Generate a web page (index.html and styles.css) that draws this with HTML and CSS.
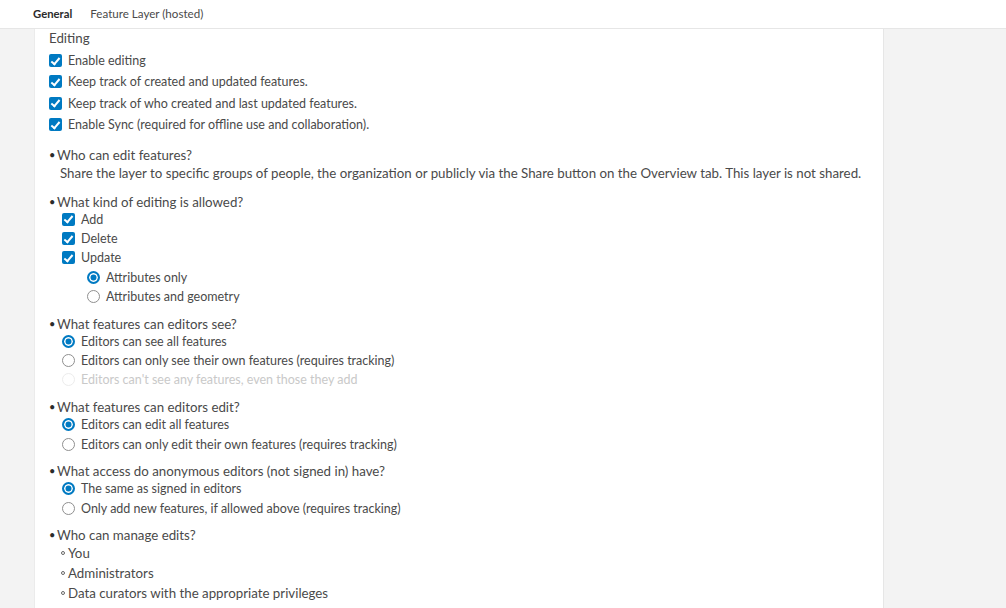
FILE: index.html
```html
<!DOCTYPE html>
<html>
<head>
<meta charset="utf-8">
<link rel="stylesheet" href="styles.css">
</head>
<body>
<header class="topbar">
  <span class="tab tab-active">General</span>
  <span class="tab">Feature Layer (hosted)</span>
</header>
<main class="main">
  <section class="panel">
    <h3 class="title">Editing</h3>
    <ul class="checks">
      <li class="row"><span class="cb"></span>Enable editing</li>
      <li class="row"><span class="cb"></span>Keep track of created and updated features.</li>
      <li class="row"><span class="cb"></span>Keep track of who created and last updated features.</li>
      <li class="row"><span class="cb"></span>Enable Sync (required for offline use and collaboration).</li>
    </ul>

    <div class="q q-first">
      <div class="qh"><span class="dot">•</span>Who can edit features?</div>
      <p class="note">Share the layer to specific groups of people, the organization or publicly via the Share button on the Overview tab. This layer is not shared.</p>
    </div>

    <div class="q">
      <div class="qh"><span class="dot">•</span>What kind of editing is allowed?</div>
      <div class="opt"><span class="cb"></span>Add</div>
      <div class="opt"><span class="cb"></span>Delete</div>
      <div class="opt"><span class="cb"></span>Update</div>
      <div class="opt sub"><span class="rb on"></span>Attributes only</div>
      <div class="opt sub"><span class="rb"></span>Attributes and geometry</div>
    </div>

    <div class="q">
      <div class="qh"><span class="dot">•</span>What features can editors see?</div>
      <div class="opt"><span class="rb on"></span>Editors can see all features</div>
      <div class="opt"><span class="rb"></span>Editors can only see their own features (requires tracking)</div>
      <div class="opt disabled"><span class="rb"></span>Editors can't see any features, even those they add</div>
    </div>

    <div class="q">
      <div class="qh"><span class="dot">•</span>What features can editors edit?</div>
      <div class="opt"><span class="rb on"></span>Editors can edit all features</div>
      <div class="opt"><span class="rb"></span>Editors can only edit their own features (requires tracking)</div>
    </div>

    <div class="q">
      <div class="qh"><span class="dot">•</span>What access do anonymous editors (not signed in) have?</div>
      <div class="opt"><span class="rb on"></span>The same as signed in editors</div>
      <div class="opt"><span class="rb"></span>Only add new features, if allowed above (requires tracking)</div>
    </div>

    <div class="q">
      <div class="qh"><span class="dot">•</span>Who can manage edits?</div>
      <div class="li"><span class="ring"></span>You</div>
      <div class="li"><span class="ring"></span>Administrators</div>
      <div class="li"><span class="ring"></span>Data curators with the appropriate privileges</div>
    </div>
  </section>
  <aside class="side"></aside>
</main>
</body>
</html>
```

FILE: styles.css
```css
* { box-sizing: border-box; }
html, body { margin: 0; padding: 0; }
body {
  width: 1006px;
  height: 608px;
  overflow: hidden;
  font-family: "Lato", "Noto Sans", sans-serif;
  color: #4a4a4a;
  background: #f3f3f3;
}
.topbar {
  height: 29px;
  background: #fff;
  border-bottom: 1px solid #e6e6e6;
  display: flex;
  align-items: center;
  padding-left: 33px;
  gap: 18px;
  font-size: 11.6px;
}
.tab { color: #4a4a4a; padding-bottom: 2px; }
.tab-active { color: #2b2b2b; font-weight: 700; font-size: 11.3px; }
.main {
  display: flex;
  padding-left: 34px;
  height: 579px;
}
.panel {
  width: 850px;
  background: #fff;
  border-left: 1px solid #ebebeb;
  border-right: 1px solid #e6e6e6;
  padding: 1px 0 0 14px;
  font-size: 12.5px;
}
.title {
  margin: 0;
  font-size: 13.3px;
  font-weight: 400;
  line-height: 17px;
  color: #4a4a4a;
}
.checks {
  list-style: none;
  margin: 3px 0 0;
  padding: 0;
}
.row {
  display: flex;
  align-items: center;
  height: 21.3px;
  gap: 6px;
}
.cb {
  width: 13px;
  height: 13px;
  border-radius: 2px;
  background: #007ac2;
  position: relative;
  flex: none;
}
.cb::after {
  content: "";
  position: absolute;
  left: 4px;
  top: 1.5px;
  width: 3px;
  height: 7px;
  border: solid #fff;
  border-width: 0 2px 2px 0;
  transform: rotate(40deg);
}
.q { margin-top: 9.5px; }
.q-first { margin-top: 12px; }
.qh {
  line-height: 16px;
  font-size: 13.3px;
  display: flex;
  align-items: center;
}
.dot {
  font-size: 11px;
  width: 8px;
  color: #2b2b2b;
}
.note {
  margin: 0;
  padding: 0 0 1px 11px;
  line-height: 20px;
  font-size: 13.3px;
}
.opt {
  display: flex;
  align-items: center;
  gap: 6px;
  height: 19.3px;
  padding-left: 13px;
}
.opt.sub { padding-left: 38px; }
.rb {
  width: 13px;
  height: 13px;
  border-radius: 50%;
  border: 1px solid #8f8f8f;
  flex: none;
  background: #fff;
}
.rb.on {
  border: 2px solid #007ac2;
  box-shadow: inset 0 0 0 1.5px #fff;
  background: #007ac2;
}
.disabled { color: #c9c9c9; }
.disabled .rb { border-color: #ececec; }
.li {
  display: flex;
  align-items: center;
  height: 20px;
  padding-left: 12px;
  font-size: 13.3px;
}
.ring {
  width: 4px;
  height: 4px;
  border: 1px solid #666;
  border-radius: 50%;
  margin-right: 3px;
  flex: none;
}
.side { flex: 1; }
```
